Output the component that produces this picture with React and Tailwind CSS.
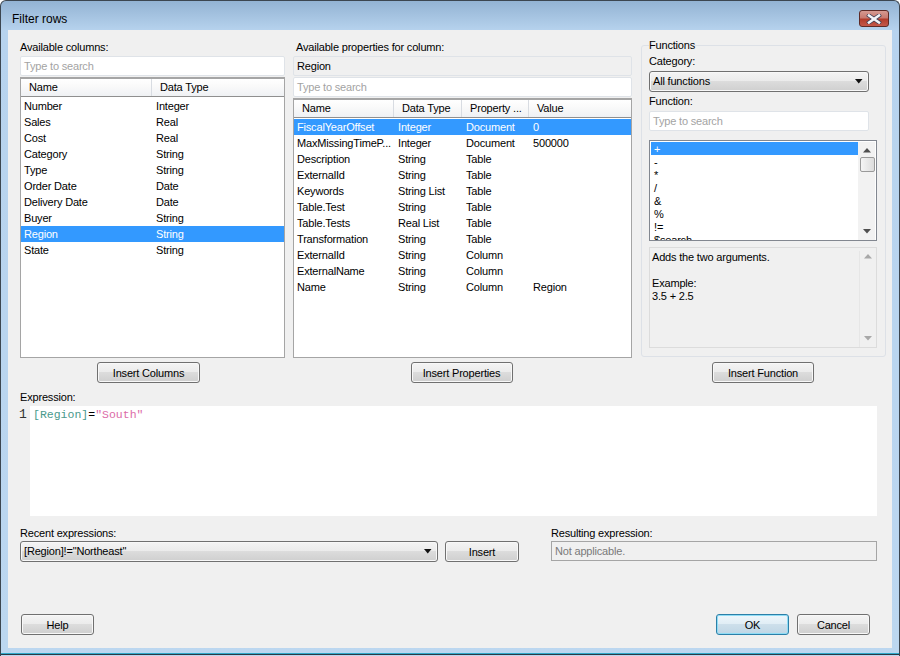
const font = { fontFamily: '"Liberation Sans", Arial, sans-serif' };

const columns = [
  ["Number", "Integer"],
  ["Sales", "Real"],
  ["Cost", "Real"],
  ["Category", "String"],
  ["Type", "String"],
  ["Order Date", "Date"],
  ["Delivery Date", "Date"],
  ["Buyer", "String"],
  ["Region", "String"],
  ["State", "String"],
];

const properties = [
  ["FiscalYearOffset", "Integer", "Document", "0"],
  ["MaxMissingTimeP...", "Integer", "Document", "500000"],
  ["Description", "String", "Table", ""],
  ["ExternalId", "String", "Table", ""],
  ["Keywords", "String List", "Table", ""],
  ["Table.Test", "String", "Table", ""],
  ["Table.Tests", "Real List", "Table", ""],
  ["Transformation", "String", "Table", ""],
  ["ExternalId", "String", "Column", ""],
  ["ExternalName", "String", "Column", ""],
  ["Name", "String", "Column", "Region"],
];

const functions = ["+", "-", "*", "/", "&", "%", "!=", "$search"];

const Btn = ({ children, className = "" }) => (
  <button className={`h-[21px] rounded-[3px] border border-[#707070] bg-[linear-gradient(#f4f4f4_0%,#ebebeb_48%,#dcdcdc_50%,#cfcfcf_100%)] text-center text-[11px] leading-[20px] tracking-[-0.18px] text-black shadow-[inset_0_0_0_1px_#f8f8f8] ${className}`}>
    {children}
  </button>
);

const DefaultBtn = ({ children, className = "" }) => (
  <button className={`h-[21px] rounded-[3px] border border-[#2c7fa8] bg-[linear-gradient(#eef6fb_0%,#e0edf5_48%,#cddfeb_50%,#bfd6e5_100%)] text-center text-[11px] leading-[20px] text-black shadow-[inset_0_0_0_1px_#8fdcf5] ${className}`}>
    {children}
  </button>
);

const Combo = ({ children, className = "" }) => (
  <div className={`flex h-[21px] items-center justify-between rounded-[3px] border border-[#707070] bg-[linear-gradient(#f4f4f4_0%,#ebebeb_48%,#dcdcdc_50%,#cfcfcf_100%)] pl-[3px] pr-[5px] text-black shadow-[inset_0_0_0_1px_#f8f8f8] ${className}`}>
    <span>{children}</span>
    <svg width="8" height="5" viewBox="0 0 8 5">
      <path d="M0 0h7.5L3.75 4.5z" fill="#111" />
    </svg>
  </div>
);

const SearchBox = () => (
  <div className="h-[20px] rounded-[2px] border border-[#dfe3e8] bg-white pl-[3px] leading-[18px] text-[#a3a3a3]">
    Type to search
  </div>
);

const Arrow = ({ down, color = "#505050" }) => (
  <svg width="9" height="5" viewBox="0 0 9 5">
    <path d={down ? "M0 0h8L4 4.5z" : "M0 4.5h8L4 0z"} fill={color} />
  </svg>
);

const HeaderCell = ({ children, last }) => (
  <div className={`h-full pl-[8px] leading-[16px] ${last ? "" : "border-r border-[#d8dce2]"}`}>{children}</div>
);

export default function App() {
  return (
    <div style={font} className="flex h-[656px] w-[900px] flex-col overflow-hidden rounded-t-[6px] border border-b-0 border-[#3c4650] bg-[linear-gradient(#93b3d3_0px,#b7d3ee_30px,#bcd7f0_100%)] text-[11px] tracking-[-0.18px] text-black">
      {/* title bar */}
      <div className="flex h-[29px] shrink-0 items-start justify-between pl-[11px] pr-[10px]">
        <span className="mt-[11px] text-[12px] leading-[15px] tracking-normal">Filter rows</span>
        <div className="mt-[9px] flex h-[17px] w-[30px] items-center justify-center rounded-[3px] border border-[#5e2a26] bg-[linear-gradient(#d69a92_0%,#c97a70_45%,#b23c2c_55%,#c4584a_100%)]">
          <svg width="16" height="10" viewBox="0 0 16 10">
            <path d="M3 1.5l10 7M13 1.5l-10 7" stroke="#3f3f55" strokeWidth="4" strokeLinecap="square" />
            <path d="M3 1.5l10 7M13 1.5l-10 7" stroke="#f4f4f8" strokeWidth="2.6" strokeLinecap="square" />
          </svg>
        </div>
      </div>

      <div className="mx-[7px] flex h-[618px] shrink-0 flex-col bg-[#f0f0f0] pl-[12px]">
        {/* three columns */}
        <div className="flex items-start gap-[8px]">
          <div className="flex w-[265px] flex-col pt-[9px]">
            <div className="h-[16px] leading-[16px]">Available columns:</div>
            <div className="mt-px">
              <SearchBox />
            </div>
            <div className="mt-px h-[281px] border border-[#a5a5a5] bg-white">
              <div className="grid h-[19px] grid-cols-[131px_1fr] border-y border-t-[#a5a5a5] border-b-[#8f8f8f] bg-[linear-gradient(#ffffff_0%,#fafafa_40%,#eff1f4_100%)]">
                <HeaderCell>Name</HeaderCell>
                <HeaderCell last>Data Type</HeaderCell>
              </div>
              <div className="pt-px">
                {columns.map(([name, type]) => (
                  <div key={name} className={`grid h-[16px] grid-cols-[131px_1fr] leading-[16px] ${name === "Region" ? "bg-[#3399ff] text-white" : ""}`}>
                    <span className="pl-[3px]">{name}</span>
                    <span className="pl-[4px]">{type}</span>
                  </div>
                ))}
              </div>
            </div>
            <div className="mt-[4px] flex justify-center pr-[8px]">
              <Btn className="w-[103px]">Insert Columns</Btn>
            </div>
          </div>

          <div className="flex w-[339px] flex-col pt-[9px]">
            <div className="h-[16px] pl-[3px] leading-[16px]">Available properties for column:</div>
            <div className="mt-px h-[20px] rounded-[2px] border border-[#dfe3e8] bg-[#f0f0f0] pl-[3px] leading-[18px]">Region</div>
            <div className="mt-px">
              <SearchBox />
            </div>
            <div className="mt-px h-[260px] border border-[#a5a5a5] bg-white">
              <div className="grid h-[19px] grid-cols-[100px_68px_67px_1fr] border-y border-t-[#a5a5a5] border-b-[#8f8f8f] bg-[linear-gradient(#ffffff_0%,#fafafa_40%,#eff1f4_100%)]">
                <HeaderCell>Name</HeaderCell>
                <HeaderCell>Data Type</HeaderCell>
                <HeaderCell>Property ...</HeaderCell>
                <HeaderCell last>Value</HeaderCell>
              </div>
              <div className="pt-px">
                {properties.map(([name, type, kind, value], i) => (
                  <div key={name + i} className={`grid h-[16px] grid-cols-[100px_68px_67px_1fr] leading-[16px] ${i === 0 ? "bg-[#3399ff] text-white" : ""}`}>
                    <span className="whitespace-nowrap pl-[3px]">{name}</span>
                    <span className="pl-[4px]">{type}</span>
                    <span className="pl-[4px]">{kind}</span>
                    <span className="pl-[4px]">{value}</span>
                  </div>
                ))}
              </div>
            </div>
            <div className="mt-[4px] flex justify-center pr-[2px]">
              <Btn className="w-[102px]">Insert Properties</Btn>
            </div>
          </div>

          <div className="flex w-[246px] flex-col pl-px pt-[7px]">
            <fieldset className="h-[320px] w-[245px] rounded-[3px] border border-[#dde1e7] pl-[7px]">
              <legend className="h-[16px] leading-[16px]">Functions</legend>
              <div className="h-[16px] leading-[16px]">Category:</div>
              <Combo className="mt-[2px] w-[220px]">All functions</Combo>
              <div className="mt-[1px] h-[16px] leading-[17px]">Function:</div>
              <div className="mt-[2px] w-[220px]">
                <SearchBox />
              </div>
              <div className="mt-[9px] flex h-[101px] w-[228px] overflow-hidden border border-[#828790] bg-white pl-px pt-px">
                <div className="w-[207px] shrink-0">
                  {functions.map((f, i) => (
                    <div key={f} className={`h-[13px] pl-[3px] leading-[15px] ${i === 0 ? "bg-[#3399ff] text-white" : ""}`}>
                      {f}
                    </div>
                  ))}
                </div>
                <div className="flex w-[17px] flex-col items-center bg-[#f2f2f2] pt-[6px] pl-px">
                  <Arrow />
                  <div className="mt-[4px] h-[15px] w-[15px] rounded-[2px] border border-[#9a9a9a] bg-[linear-gradient(90deg,#f5f5f5,#dcdcdc)]" />
                  <div className="flex-1" />
                  <div className="pb-[6px]">
                    <Arrow down />
                  </div>
                </div>
              </div>
              <div className="mt-[6px] flex h-[101px] w-[228px] border border-[#dcdcdc] bg-[#f0f0f0] pt-[3px]">
                <div className="w-[209px] shrink-0 pl-[2px] leading-[13px]">
                  <div>Adds the two arguments.</div>
                  <div className="mt-[13px]">Example:</div>
                  <div>3.5 + 2.5</div>
                </div>
                <div className="flex w-[17px] flex-col items-center border-l border-[#e6e6e6] pb-[6px] pt-[3px]">
                  <Arrow color="#a8a8a8" />
                  <div className="flex-1" />
                  <Arrow down color="#a8a8a8" />
                </div>
              </div>
            </fieldset>
            <div className="mt-[5px] flex justify-center pr-px">
              <Btn className="w-[102px]">Insert Function</Btn>
            </div>
          </div>
        </div>

        {/* expression editor */}
        <div className="mt-[6px] h-[17px] leading-[16px]">Expression:</div>
        <div className="flex h-[110px]">
          <div className="-ml-px w-[11px] shrink-0 pt-[1px] font-['Liberation_Mono'] text-[13px] leading-[15px] tracking-normal text-[#333]">1</div>
          <div className="w-[847px] bg-white pl-[3px] pt-[1px] font-['Liberation_Mono'] text-[11.5px] leading-[15px] tracking-normal">
            <span className="text-[#4a9a8c]">[Region]</span>
            <span>=</span>
            <span className="text-[#dc6ca8]">"South"</span>
          </div>
        </div>

        {/* recent + resulting */}
        <div className="mt-[9px] flex">
          <div className="w-[418px]">
            <div className="h-[16px] leading-[16px]">Recent expressions:</div>
            <Combo>[Region]!="Northeast"</Combo>
          </div>
          <div className="ml-[7px] w-[74px] pt-[16px]">
            <Btn className="w-full">Insert</Btn>
          </div>
          <div className="ml-[32px] w-[326px]">
            <div className="h-[16px] leading-[16px]">Resulting expression:</div>
            <div className="h-[20px] border border-[#a5a5a5] bg-[#f0f0f0] pl-[3px] leading-[18px] text-[#7a7a7a]">Not applicable.</div>
          </div>
        </div>

        {/* dialog buttons */}
        <div className="mt-[52px] flex pl-px pr-[22px]">
          <Btn className="w-[73px]">Help</Btn>
          <div className="flex-1" />
          <DefaultBtn className="w-[73px]">OK</DefaultBtn>
          <Btn className="ml-[8px] w-[73px]">Cancel</Btn>
        </div>
      </div>
      <div className="h-[5px] shrink-0" />
      <div className="h-[1px] shrink-0 bg-[#2fa9c9]" />
      <div className="h-[1px] shrink-0 bg-[#2a3a44]" />
    </div>
  );
}
